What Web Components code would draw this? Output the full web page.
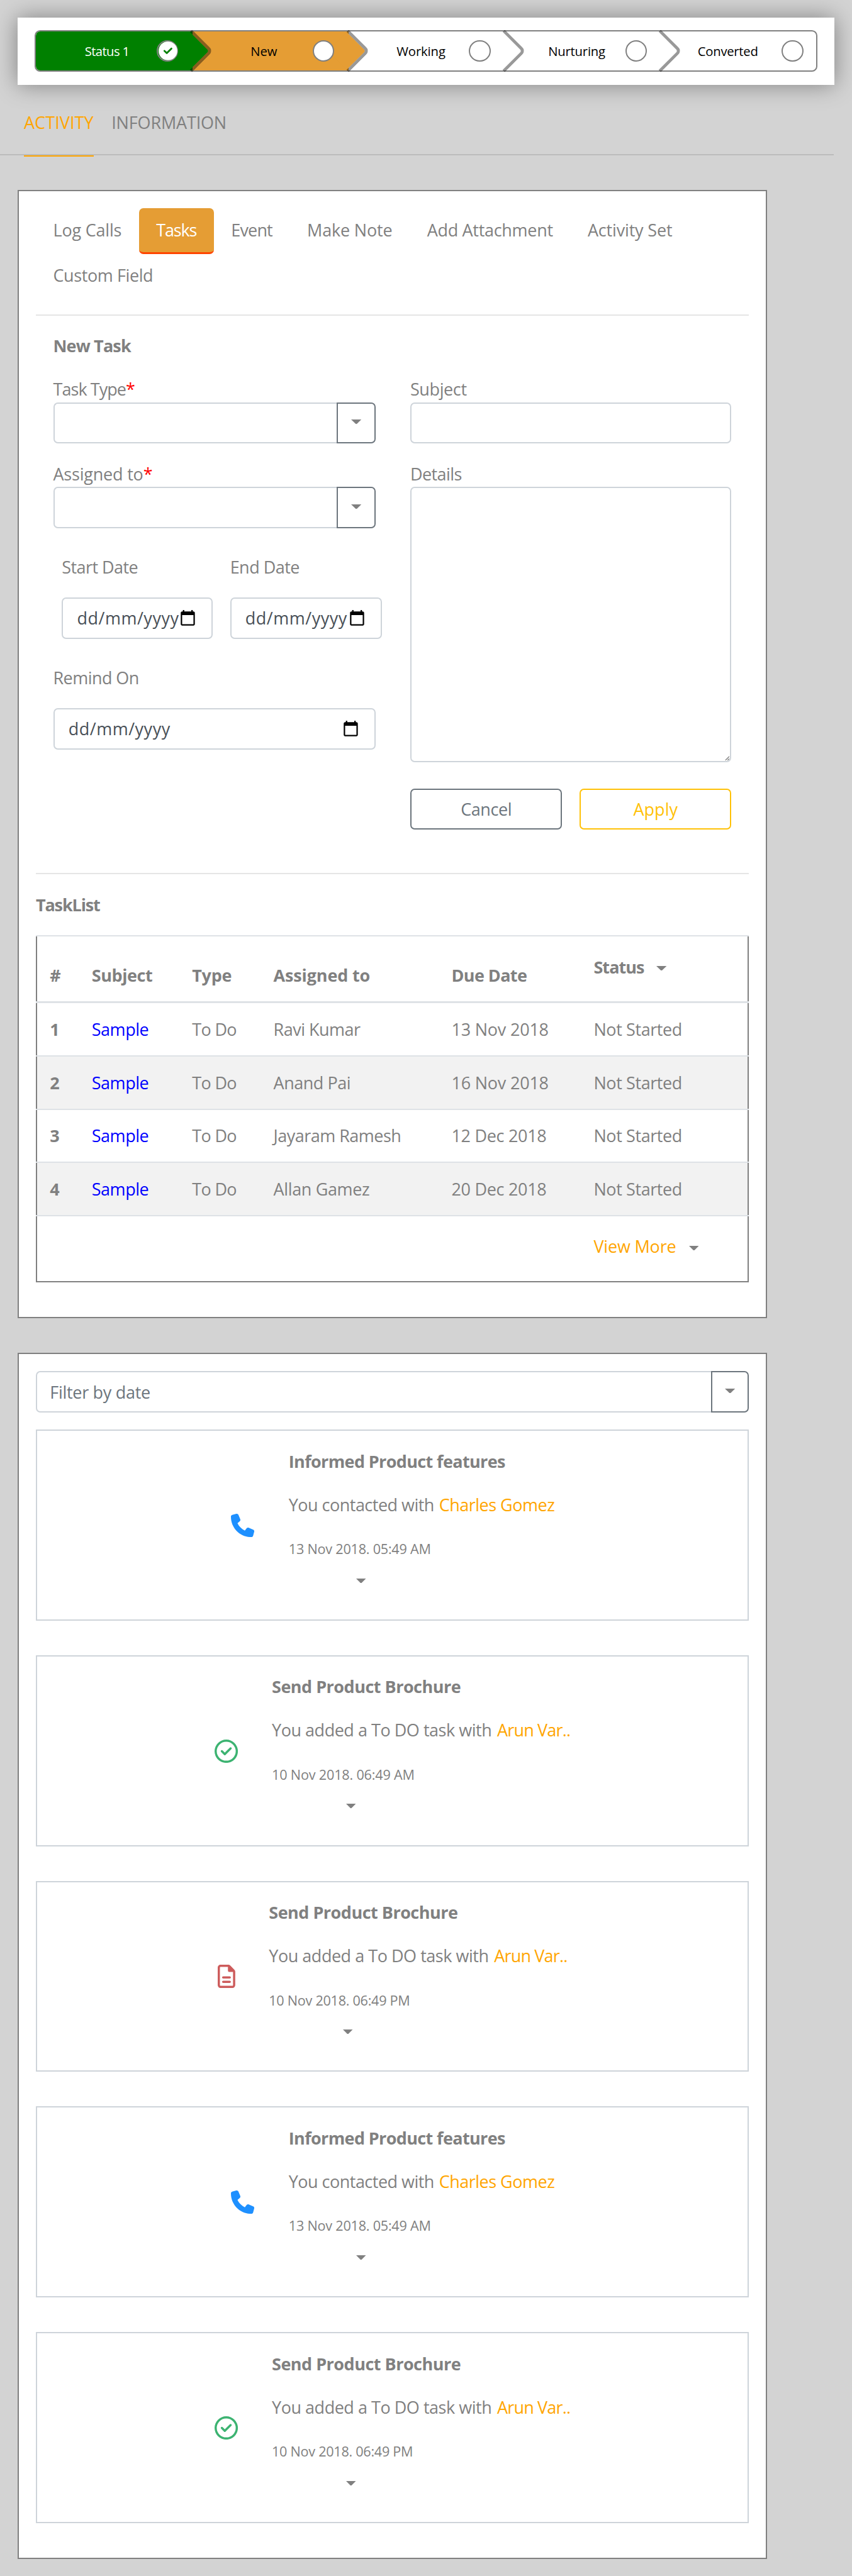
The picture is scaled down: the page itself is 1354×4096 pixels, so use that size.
<!DOCTYPE html>
<html lang="en">
<head>
<meta charset="utf-8">
<title>Lead activity</title>
<style>
  /* 1rem = 100 design pixels */
  html { font-size: 86.24px; background: #d3d3d3; }
  body { margin: 0; font: .313rem/.48rem "Open Sans", "Noto Sans", sans-serif; color: #808080; }
</style>
</head>
<body>
<crm-page></crm-page>
<script>
const define = (name, html, setup) => {
  const tpl = document.createElement('template');
  tpl.innerHTML = '<style>*,*::before,*::after{box-sizing:border-box}:host{box-sizing:border-box;display:block}</style>' + html;
  customElements.define(name, class extends HTMLElement {
    connectedCallback() {
      if (this.shadowRoot) return;
      this.attachShadow({ mode: 'open' }).appendChild(tpl.content.cloneNode(true));
      if (setup) setup(this, this.shadowRoot);
    }
  });
};

/* Single line of text, tracked so that it occupies the advance width "w" (design pixels). */
define('fit-text', `<style>:host{display:inline-block;white-space:pre;flex:none}</style><slot></slot>`, el => {
  const rem = parseFloat(getComputedStyle(document.documentElement).fontSize);
  const target = +el.getAttribute('w') * rem / 100;
  const natural = el.getBoundingClientRect().width;
  const n = el.textContent.length;
  if (target && natural) el.style.letterSpacing = ((target - natural) / n).toFixed(3) + 'px';
});

define('ui-caret', `<style>:host{width:.19rem;height:.085rem;flex:none}svg{display:block;width:100%;height:100%}</style>
<svg viewBox="0 0 20 9" preserveAspectRatio="none"><path d="M0 0h20l-8.6 8.4q-1.4 1.2-2.8 0z" fill="#808080"/></svg>`);

const ICONS = {
  phone: ['0 0 512 512', '#1e90ff', 'M164.9 24.6c-7.7-18.6-28-28.5-47.4-23.2l-88 24C12.1 30.2 0 46 0 64C0 311.4 200.6 512 448 512c18 0 33.8-12.1 38.6-29.5l24-88c5.3-19.4-4.6-39.7-23.2-47.4l-96-40c-16.3-6.8-35.2-2.1-46.3 11.6L304.7 368C234.3 334.7 177.3 277.7 144 207.3L193.3 167c13.7-11.2 18.4-30 11.6-46.3l-40-96z'],
  check: ['0 0 512 512', '#3cb371', 'M256 48a208 208 0 1 1 0 416 208 208 0 1 1 0-416zm0 464A256 256 0 1 0 256 0a256 256 0 1 0 0 512zM369 209c9.4-9.4 9.4-24.6 0-33.9s-24.6-9.4-33.9 0l-111 111-47-47c-9.4-9.4-24.6-9.4-33.9 0s-9.4 24.6 0 33.9l64 64c9.4 9.4 24.6 9.4 33.9 0L369 209z'],
  done: ['0 0 512 512', '#fff', 'M256 512A256 256 0 1 0 256 0a256 256 0 1 0 0 512zM369 209L241 337c-9.4 9.4-24.6 9.4-33.9 0l-64-64c-9.4-9.4-9.4-24.6 0-33.9s24.6-9.4 33.9 0l47 47L335 175c9.4-9.4 24.6-9.4 33.9 0s9.4 24.6 0 33.9z'],
  file: ['0 0 384 512', '#cd5c5c', 'M64 464c-8.8 0-16-7.2-16-16V64c0-8.8 7.2-16 16-16H224v80c0 17.7 14.3 32 32 32h80V448c0 8.8-7.2 16-16 16H64zM64 0C28.7 0 0 28.7 0 64V448c0 35.3 28.7 64 64 64H320c35.3 0 64-28.7 64-64V154.5c0-17-6.7-33.3-18.7-45.3L274.7 18.7C262.7 6.7 246.5 0 229.5 0H64zm56 256c-13.3 0-24 10.7-24 24s10.7 24 24 24H264c13.3 0 24-10.7 24-24s-10.7-24-24-24H120zm0 96c-13.3 0-24 10.7-24 24s10.7 24 24 24H264c13.3 0 24-10.7 24-24s-10.7-24-24-24H120z'],
  calendar: ['0 0 24 24', '#000', 'M20 3h-1V1h-2v2H7V1H5v2H4c-1.1 0-2 .9-2 2v16c0 1.1.9 2 2 2h16c1.1 0 2-.9 2-2V5c0-1.1-.9-2-2-2zm0 18H4V8h16v13z']
};
define('ui-icon', `<style>:host{flex:none}svg{display:block;width:100%;height:100%}</style><svg><path/></svg>`, (el, root) => {
  const [box, fill, d] = ICONS[el.getAttribute('name')];
  root.querySelector('svg').setAttribute('viewBox', box);
  root.querySelector('path').setAttribute('fill', fill);
  root.querySelector('path').setAttribute('d', d);
});

/* One stage of the lead progress bar. */
define('stage-step', `<style>
:host{position:relative;flex:none;width:2.88rem;height:100%;display:flex;align-items:center;background:var(--fill,transparent);color:#000;font-size:.235rem;line-height:.76rem}
:host([last]){width:auto;flex:1 1 0;min-width:0}
:host([first]){border-radius:.08rem 0 0 .08rem}
:host([done]){--fill:#008000;color:#fff}
:host([current]){--fill:#e59d34}
.label{width:2.22rem;flex:none;padding-left:var(--x);display:flex;margin-top:.01rem}
.dot{width:.4rem;height:.4rem;border:2px solid #808080;border-radius:50%;background:#fff;flex:none;display:flex;align-items:center;justify-content:flex-end;position:relative;z-index:2}
.dot ui-icon{display:none;width:.345rem;height:.345rem;flex:none}
:host([done]) .dot{background:#008000}
:host([done]) .dot ui-icon{display:block;margin-right:-1px}
.tip{position:absolute;z-index:1;width:.56rem;height:.56rem;right:-.28rem;top:.08rem;background:var(--fill,#fff);border:0 solid rgba(0,0,0,.4);border-width:.06rem .06rem 0 0;border-radius:.02rem .1rem 0 0;transform:rotate(45deg);background-clip:padding-box}
:host([last]) .tip{display:none}
</style><div class="label"><slot></slot></div><div class="dot"><ui-icon name="done"></ui-icon></div><div class="tip"></div>`);

define('stage-bar', `<style>
:host{width:15.06rem;height:1.24rem;margin-left:.32rem;background:#fff;box-shadow:0 0 .4rem #808080;padding:.24rem .32rem}
.track{display:flex;height:.76rem;width:14.42rem;border:2px solid #808080;border-radius:.1rem}
</style><div class="track">
<stage-step first done style="--x:.9rem"><fit-text w="82">Status 1</fit-text></stage-step>
<stage-step current style="--x:1.075rem"><fit-text w="49">New</fit-text></stage-step>
<stage-step style="--x:.885rem"><fit-text w="90">Working</fit-text></stage-step>
<stage-step style="--x:.8rem"><fit-text w="105">Nurturing</fit-text></stage-step>
<stage-step last style="--x:.675rem"><fit-text w="111">Converted</fit-text></stage-step>
</div>`);

define('tab-strip', `<style>
:host{display:flex;width:15.36rem;height:1.3rem;border-bottom:2px solid #bbb;padding:.46rem 0 0 .44rem;gap:.33rem}
.tab{height:.865rem;flex:none}
.on{color:#ffa500;border-bottom:2px solid #ffa500}
</style><div class="tab on"><fit-text w="128.5">ACTIVITY</fit-text></div><div class="tab"><fit-text w="212">INFORMATION</fit-text></div>`);

define('white-card', `<style>:host{width:13.82rem;margin-left:.32rem;background:#fff;border:2px solid #808080;padding:calc(.34rem - 2px)}</style><slot></slot>`);

define('pill-nav', `<style>
:host{height:1.98rem;border-bottom:2px solid #e5e5e5;display:flex;flex-wrap:wrap;align-content:flex-start}
.p{height:.84rem;padding:.16rem .32rem 0}
.on{color:#fff;background:#e59d34;border-radius:.08rem;border-bottom:.04rem solid #ff4500}
</style><div class="p"><fit-text w="126">Log Calls</fit-text></div><div class="p on"><fit-text w="74">Tasks</fit-text></div><div class="p"><fit-text w="76">Event</fit-text></div><div class="p"><fit-text w="157">Make Note</fit-text></div><div class="p"><fit-text w="232">Add Attachment</fit-text></div><div class="p"><fit-text w="156">Activity Set</fit-text></div><div class="p"><fit-text w="184">Custom Field</fit-text></div>`);

define('text-box', `<style>:host{height:.76rem;border:2px solid #ced4da;border-radius:.08rem;background:#fff}</style>`);

define('combo-box', `<style>
:host{display:flex;height:.76rem}
.in{flex:1;border:2px solid #ced4da;border-right:0;border-radius:.08rem 0 0 .08rem;padding-left:calc(.26rem - 2px);display:flex;align-items:center;color:#6c757d;padding-top:.02rem}
.b{width:var(--bw,.72rem);border:2px solid #6c757d;border-radius:0 .08rem .08rem 0;display:flex;justify-content:center;padding-top:calc(.32rem - 2px)}
</style><div class="in"><slot></slot></div><div class="b"><ui-caret></ui-caret></div>`);

define('date-box', `<style>
:host{height:.76rem;border:2px solid #ced4da;border-radius:.08rem;display:flex;align-items:center;justify-content:space-between;padding:0 calc(.303rem - 2px) 0 calc(.28rem - 2px);color:#495057}
.t{display:flex;overflow:hidden;flex:0 1 auto;min-width:0}
ui-icon{width:.312rem;height:.312rem;margin-bottom:.02rem}
</style><div class="t"><fit-text w="188">dd/mm/yyyy</fit-text></div><ui-icon name="calendar"></ui-icon>`);

define('push-button', `<style>
:host{width:2.8rem;height:.76rem;border:2px solid;border-radius:.08rem;display:flex;align-items:center;justify-content:center;color:#6c757d}
:host([warn]){color:#ffc107}
</style><slot></slot>`);

define('task-form', `<style>
:host{height:10.3rem;border-bottom:2px solid #e5e5e5;padding:.32rem .32rem 0;display:flex;flex-direction:column;gap:.32rem}
b,i,.l{display:flex}
b{height:.48rem}
i{font-style:normal;color:#f00}
.cols{display:flex;gap:.64rem}
.c{display:flex;flex-direction:column;gap:.32rem}
.c1{width:5.94rem}.c2{width:5.92rem}
.l{height:.48rem}
.pair{display:flex;width:5.9rem;gap:.32rem;margin:.16rem 0 .16rem .16rem}
.pair>div,.rem{display:flex;flex-direction:column;gap:.32rem}
.area{height:5.08rem;border:2px solid #ced4da;border-radius:.08rem;display:flex;justify-content:flex-end;align-items:flex-end}
.area svg{width:.09rem;height:.09rem;margin:0 .01rem .01rem 0}
.btns{display:flex;gap:.32rem;margin-top:.16rem}
</style>
<b><fit-text w="143">New Task</fit-text></b>
<div class="cols">
<div class="c c1">
<div><div class="l"><fit-text w="134">Task Type</fit-text><i><fit-text w="13">*</fit-text></i></div><combo-box></combo-box></div>
<div><div class="l"><fit-text w="166">Assigned to</fit-text><i><fit-text w="13">*</fit-text></i></div><combo-box></combo-box></div>
<div class="pair">
<div style="width:2.78rem"><div class="l"><fit-text w="140">Start Date</fit-text></div><date-box></date-box></div>
<div style="width:2.8rem"><div class="l"><fit-text w="128">End Date</fit-text></div><date-box></date-box></div>
</div>
<div class="rem"><div class="l"><fit-text w="158">Remind On</fit-text></div><date-box></date-box></div>
</div>
<div class="c c2">
<div><div class="l"><fit-text w="104">Subject</fit-text></div><text-box></text-box></div>
<div><div class="l"><fit-text w="95">Details</fit-text></div><div class="area"><svg viewBox="0 0 9 9"><path d="M1 8L8 1M5 8L8 5" stroke="#666" stroke-width="1.3"/></svg></div></div>
<div class="btns"><push-button><fit-text w="94">Cancel</fit-text></push-button><push-button warn><fit-text w="82">Apply</fit-text></push-button></div>
</div>
</div>`);

define('task-row', `<style>
:host{height:.98rem;border-top:2px solid #dee2e6}
:host([first]){height:1rem;border-top-width:.04rem}
:host([head]){height:1.22rem;font-weight:bold}
:host([foot]){height:1.24rem}
.r{height:100%;border:0 solid #808080;border-width:0 2px;padding:calc(.26rem - 2px) 0 0 calc(.26rem - 2px);display:grid;grid-template-columns:.77rem 1.85rem 1.5rem 3.28rem 2.62rem 1fr;align-content:start}
:host([first]) .r{padding-top:.24rem}
:host([head]) .r{padding-top:calc(.5rem - 2px)}
:host([foot]) .r{padding-top:calc(.34rem - 2px);border-bottom-width:2px}
:host([odd]) .r{background:#f2f2f2}
</style><div class="r"><slot></slot></div>`);

define('task-list', `<style>
:host{padding-top:.32rem;height:7.52rem}
b.t{display:block;height:.8rem}
.n{font-weight:bold}.a{color:#00f}.v{color:#ffa500}
.f{display:flex}
</style><b class="t"><fit-text w="118">TaskList</fit-text></b>
<task-row head><span><fit-text w="19">#</fit-text></span><span><fit-text w="112">Subject</fit-text></span><span><fit-text w="73">Type</fit-text></span><span><fit-text w="178">Assigned to</fit-text></span><span><fit-text w="139">Due Date</fit-text></span><span class="f" style="margin-top:-.145rem"><fit-text w="93">Status</fit-text><ui-caret style="margin:.215rem 0 0 .23rem"></ui-caret></span></task-row>
<div id="rows"></div>
<task-row foot><span></span><span></span><span></span><span></span><span></span><span class="f v"><fit-text w="152">View More</fit-text><ui-caret style="margin:.23rem 0 0 .24rem;width:.18rem"></ui-caret></span></task-row>`, (el, root) => {
  const rows = [['Ravi Kumar', 160, '13 Nov 2018', 179], ['Anand Pai', 142, '16 Nov 2018', 179], ['Jayaram Ramesh', 235, '12 Dec 2018', 175], ['Allan Gamez', 177, '20 Dec 2018', 175]];
  root.getElementById('rows').innerHTML = rows.map(([name, nw, date, dw], i) =>
    `<task-row ${i ? '' : 'first'} ${i % 2 ? 'odd' : ''}><span class="n"><fit-text w="18">${i + 1}</fit-text></span><span class="a"><fit-text w="105">Sample</fit-text></span><span><fit-text w="82">To Do</fit-text></span><span><fit-text w="${nw}">${name}</fit-text></span><span><fit-text w="${dw}">${date}</fit-text></span><span><fit-text w="163">Not Started</fit-text></span></task-row>`).join('');
});

define('activity-item', `<style>
:host{height:3.52rem;border:2px solid #ced4da;display:flex;padding:calc(.34rem - 2px) 0 0 calc(var(--x) - 2px)}
::slotted(ui-icon){margin-top:1.21rem;width:var(--iw,.43rem);height:.43rem}
.b{margin-left:var(--g)}
.t{height:.8rem;font-weight:bold}
.l{height:.82rem;display:flex;gap:var(--ng,.09rem)}
.d{height:.78rem;font-size:.251rem}
.n{color:#ffa500}
ui-caret{margin-left:var(--c);width:.18rem}
</style><slot name="icon"></slot><div class="b"><div class="t"><slot name="title"></slot></div><div class="l"><slot name="line"></slot><span class="n"><slot name="who"></slot></span></div><div class="d"><slot name="date"></slot></div><ui-caret></ui-caret></div>`);

define('activity-feed', `<style>
:host{display:flex;flex-direction:column;gap:.64rem;height:21.9rem}
.top{margin-bottom:-.32rem}
</style><combo-box class="top" style="--bw:.7rem"><fit-text w="185">Filter by date</fit-text></combo-box><slot></slot>`, (el, root) => {
  const call = ['phone', '--x:3.59rem;--g:.64rem;--c:1.24rem', 'Informed Product features', 399, 'You contacted with', 268, 'Charles Gomez', 213, '13 Nov 2018. 05:49 AM', 262];
  const task = ['check', '--x:3.29rem;--g:.63rem;--c:1.37rem;--ng:.1rem', 'Send Product Brochure', 348, 'You added a To DO task with', 405, 'Arun Var..', 135, '10 Nov 2018. 06:49 AM', 263];
  const file = ['file', '--x:3.35rem;--iw:.323rem;--g:.622rem;--c:1.37rem;--ng:.1rem', ...task.slice(2, 8), '10 Nov 2018. 06:49 PM', 260];
  const late = [...task.slice(0, 8), '10 Nov 2018. 06:49 PM', 260];
  [call, task, file, call, late].forEach(([icon, css, title, tw, line, lw, who, ww, date, dw]) => {
    const item = document.createElement('activity-item');
    item.style.cssText = css;
    item.innerHTML = `<ui-icon slot="icon" name="${icon}"></ui-icon><fit-text slot="title" w="${tw}">${title}</fit-text><fit-text slot="line" w="${lw}">${line}</fit-text><fit-text slot="who" w="${ww}">${who}</fit-text><fit-text slot="date" w="${dw}">${date}</fit-text>`;
    root.appendChild(item);
  });
});

define('crm-page', `<style>
:host{height:47.49rem;padding-top:.32rem;background:#d3d3d3;overflow:hidden}
.one{margin-top:.64rem;height:20.8rem}
.two{margin-top:.64rem;height:22.24rem}
</style><stage-bar></stage-bar><tab-strip></tab-strip>
<white-card class="one"><pill-nav></pill-nav><task-form></task-form><task-list></task-list></white-card>
<white-card class="two"><activity-feed></activity-feed></white-card>`);
</script>
</body>
</html>
